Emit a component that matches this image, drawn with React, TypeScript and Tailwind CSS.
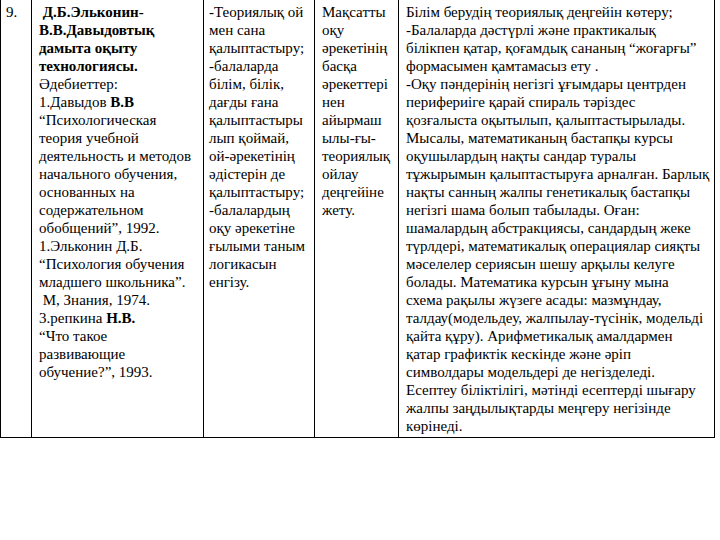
import React from 'react';

type Line = { text: string; bold?: boolean; parts?: { t: string; b?: boolean }[] };

const col1 = ['9.'];

const col2: Line[] = [
  { text: '\u00a0Д.Б.Эльконин-', bold: true },
  { text: 'В.В.Давыдовтық', bold: true },
  { text: 'дамыта оқыту', bold: true },
  { text: 'технологиясы.', bold: true },
  { text: 'Әдебиеттер:' },
  { text: '', parts: [{ t: '1.Давыдов ' }, { t: 'В.В', b: true }] },
  { text: '“Психологическая' },
  { text: 'теория учебной' },
  { text: 'деятельность и методов' },
  { text: 'начального обучения,' },
  { text: 'основанных на' },
  { text: 'содержательном' },
  { text: 'обобщений”, 1992.' },
  { text: '1.Эльконин Д.Б.' },
  { text: '“Психология обучения' },
  { text: 'младшего школьника”.' },
  { text: '\u00a0М, Знания, 1974.' },
  { text: '', parts: [{ t: '3.репкина ' }, { t: 'Н.В.', b: true }] },
  { text: '“Что такое' },
  { text: 'развивающие' },
  { text: 'обучение?”, 1993.' },
];

const col3 = [
  '-Теориялық ой',
  'мен сана',
  'қалыптастыру;',
  '-балаларда',
  'білім, білік,',
  'дағды ғана',
  'қалыптастыры',
  'лып қоймай,',
  'ой-әрекетінің',
  'әдістерін де',
  'қалыптастыру;',
  '-балалардың',
  'оқу әрекетіне',
  'ғылыми таным',
  'логикасын',
  'енгізу.',
];

const col4 = [
  'Мақсатты',
  'оқу',
  'әрекетінің',
  'басқа',
  'әрекеттері',
  'нен',
  'айырмаш',
  'ылы-ғы-',
  'теориялық',
  'ойлау',
  'деңгейіне',
  'жету.',
];

const col5 = [
  'Білім берудің теориялық деңгейін көтеру;',
  '-Балаларда дәстүрлі және практикалық',
  'білікпен қатар, қоғамдық сананың “жоғарғы”',
  'формасымен қамтамасыз ету .',
  '-Оқу пәндерінің негізгі ұғымдары центрден',
  'перифериіге қарай спираль тәріздес',
  'қозғалыста оқытылып, қалыптастырылады.',
  'Мысалы, математиканың бастапқы курсы',
  'оқушылардың нақты сандар туралы',
  'тұжырымын қалыптастыруға арналған. Барлық',
  'нақты санның жалпы генетикалық бастапқы',
  'негізгі шама болып табылады. Оған:',
  'шамалардың абстракциясы, сандардың жеке',
  'түрлдері, математикалық операциялар сияқты',
  'мәселелер сериясын шешу арқылы келуге',
  'болады. Математика курсын ұғыну мына',
  'схема рақылы жүзеге асады: мазмұндау,',
  'талдау(модельдеу, жалпылау-түсінік, модельді',
  'қайта құру). Арифметикалық амалдармен',
  'қатар графиктік кескінде және әріп',
  'символдары модельдері де негізделеді.',
  'Есептеу біліктілігі, мәтінді есептерді шығару',
  'жалпы заңдылықтарды меңгеру негізінде',
  'көрінеді.',
];

const Plain = ({ lines }: { lines: string[] }) => (
  <>
    {lines.map((l, i) => (
      <div key={i} className="whitespace-nowrap">
        {l}
      </div>
    ))}
  </>
);

export default function App() {
  return (
    <div className="w-[720px] h-[540px] bg-white text-black text-[15px] leading-[18px] font-['Liberation_Serif','Times_New_Roman','DejaVu_Serif',serif]">
      <div className="grid grid-cols-[31px_172px_111px_84px_316px] w-[715px] h-[438px] border-l border-b border-black">
        <div className="border-r border-black pl-[5px] pt-[3px]">
          <Plain lines={col1} />
        </div>
        <div className="border-r border-black pl-[7px] pt-[3px]">
          {col2.map((l, i) => (
            <div key={i} className={`whitespace-nowrap ${l.bold ? 'font-bold' : ''}`}>
              {l.parts
                ? l.parts.map((p, j) => (
                    <span key={j} className={p.b ? 'font-bold' : ''}>
                      {p.t}
                    </span>
                  ))
                : l.text}
            </div>
          ))}
        </div>
        <div className="border-r border-black pl-[5px] pt-[3px]">
          <Plain lines={col3} />
        </div>
        <div className="border-r border-black pl-[7px] pt-[3px]">
          <Plain lines={col4} />
        </div>
        <div className="border-r border-black pl-[7px] pt-[3px]">
          <Plain lines={col5} />
        </div>
      </div>
    </div>
  );
}
